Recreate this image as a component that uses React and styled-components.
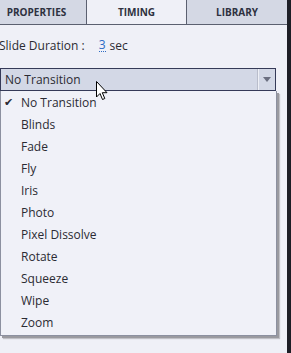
import React from 'react'
import styled, { createGlobalStyle } from 'styled-components'

const Global = createGlobalStyle`
  html, body { margin:0; padding:0; background:#eff0f7; }
  body { font-family:"Open Sans","Noto Sans",sans-serif; color:#2b2b33; overflow:hidden; }
`

const Page = styled.div`
  position:relative;
  width:291px;
  height:353px;
  display:flex;
`

const Panel = styled.div`
  flex:1;
  display:flex;
  flex-direction:column;
  background:#eff0f7;
  overflow:hidden;
`

const Edge = styled.div`
  width:4px;
  background:#1d1e26;
`

const Tabs = styled.div`
  display:flex;
  height:24px;
  margin-left:-13px;
  border-bottom:1px solid #5b6070;
`

const Tab = styled.div`
  width:100px;
  display:flex;
  align-items:center;
  justify-content:center;
  font-size:10px;
  font-weight:700;
  color:#2e3140;
  background:${p => (p.active ? '#eff0f7' : '#d4d8e4')};
  border-right:${p => (p.last ? 'none' : '1px solid #5b6070')};
  box-sizing:border-box;
`

const Duration = styled.div`
  display:flex;
  align-items:center;
  gap:4px;
  margin:11px 0 0 -1px;
  font-size:12px;
  height:18px;
`

const Num = styled.span`
  color:#2d6bc4;
  margin-left:10px;
  border-bottom:1px dotted #2d6bc4;
  line-height:13px;
`

const Select = styled.div`
  margin-top:14px;
  width:276px;
  height:23px;
  box-sizing:border-box;
  border:1px solid #353a58;
  background:#d3d8e6;
  display:flex;
  align-items:center;
  font-size:12px;
  padding-left:4px;
`

const SelectText = styled.span`
  flex:1;
`

const ArrowBox = styled.div`
  width:17px;
  height:100%;
  border-left:1px solid #b9bdcb;
  box-shadow:inset 1px 0 0 #eef0f6;
  display:flex;
  align-items:center;
  justify-content:center;
`

const Menu = styled.div`
  width:277px;
  box-sizing:border-box;
  border:1px solid #8c90a0;
  border-top:none;
  background:#f0f1f8;
  box-shadow:2px 2px 0 #9a9aa0, 3px 3px 1px #c0c0c6;
  padding:0 0 2px;
`

const Item = styled.div`
  height:22px;
  display:flex;
  align-items:center;
  font-size:12px;
  padding-left:20px;
  position:relative;
`

const Check = styled.span`
  position:absolute;
  left:3px;
  top:3px;
  font-size:11px;
`

const Cursor = styled.svg`
  position:absolute;
  left:96px;
  top:81px;
`

const items = ['No Transition', 'Blinds', 'Fade', 'Fly', 'Iris', 'Photo', 'Pixel Dissolve', 'Rotate', 'Squeeze', 'Wipe', 'Zoom']

export default function App() {
  return (
    <Page>
      <Global />
      <Panel>
        <Tabs>
          <Tab>PROPERTIES</Tab>
          <Tab active>TIMING</Tab>
          <Tab last>LIBRARY</Tab>
        </Tabs>
        <Duration>
          Slide Duration :<Num>3</Num>sec
        </Duration>
        <Select>
          <SelectText>No Transition</SelectText>
          <ArrowBox>
            <svg width="8" height="5" viewBox="0 0 8 5"><path d="M0 0h8L4 5z" fill="#6b6f80" /></svg>
          </ArrowBox>
        </Select>
        <Menu>
          {items.map((t, i) => (
            <Item key={t}>
              {i === 0 && <Check>✔</Check>}
              {t}
            </Item>
          ))}
        </Menu>
      </Panel>
      <Edge />
      <Cursor width="12" height="20" viewBox="0 0 12 20">
        <path d="M0.5 0.5 L0.5 16 L4 12.5 L6.5 18.5 L8.8 17.5 L6.3 11.7 L11 11.7 Z" fill="#fff" stroke="#000" strokeWidth="1" strokeLinejoin="round" />
      </Cursor>
    </Page>
  )
}
